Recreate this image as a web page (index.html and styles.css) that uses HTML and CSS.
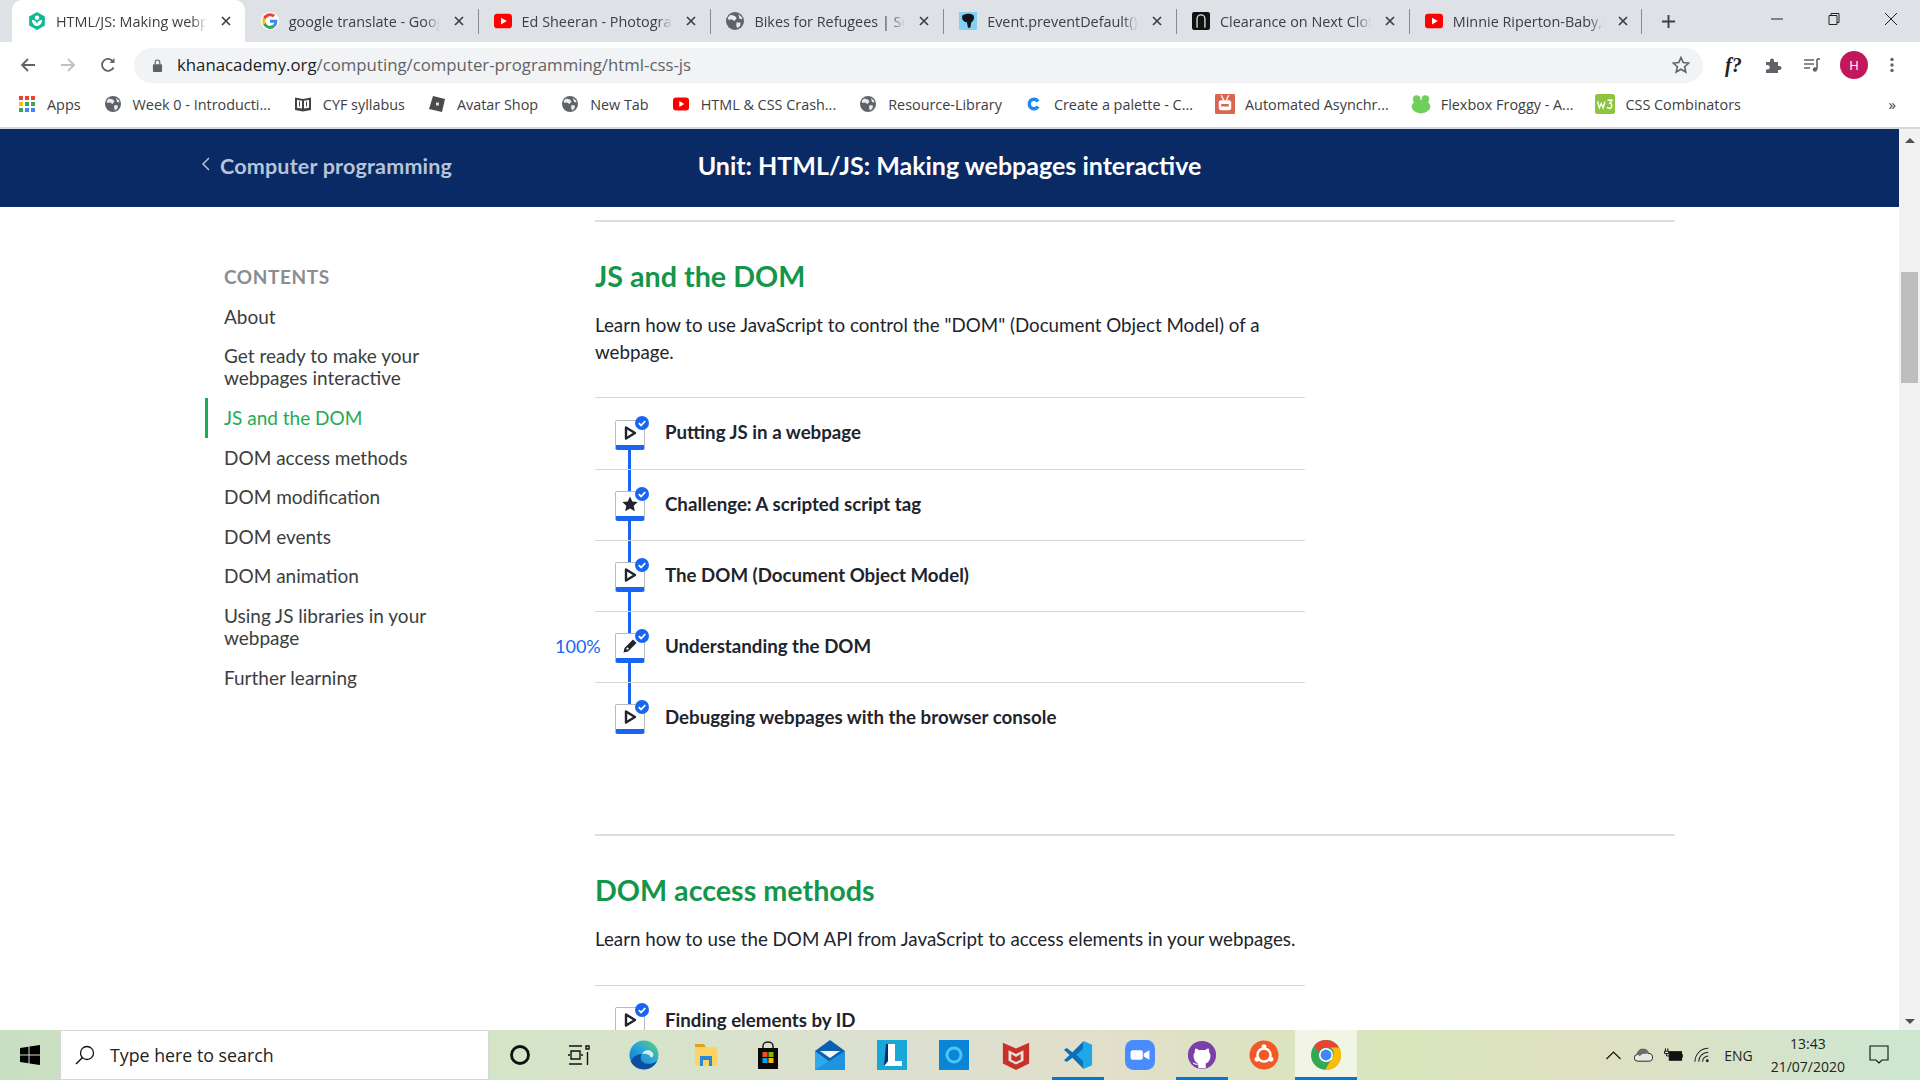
FILE: index.html
```html
<!DOCTYPE html>
<html lang="en">
<head>
    <meta charset="UTF-8">
    <title>HTML/JS: Making webpages interactive</title>
    <link rel="stylesheet" href="styles.css">
</head>
<body>
    <svg class="defs" width="0" height="0">
        <defs>
            <linearGradient id="edge-body" x1="0" y1="1" x2="1" y2="0"><stop offset="0" stop-color="#0c6fc4"/><stop offset=".55" stop-color="#2aa6dc"/><stop offset="1" stop-color="#5fd36a"/></linearGradient>
        </defs>
        <symbol id="yt" viewBox="0 0 16 16"><rect x="0" y="1.5" width="16" height="13" rx="3" fill="#f00"/><path d="M6.300 5v6l5-3z" fill="#fff"/></symbol>
        <symbol id="globe" viewBox="0 0 16 16"><circle cx="8" cy="8" r="8" fill="#5f6368"/><path d="M4 2.500l4 1 1.500 2-2 2.500-2.500-1.500-2.500.5-1-2zM9.500 9l3.500.5-.5 3-2.500 2-1-3zM11 2l3 2.500.5 2-2.500-.5z" fill="#e8eaed"/></symbol>
        <symbol id="close" viewBox="0 0 10 10"><path d="M1 1l8 8M9 1l-8 8" stroke="#3c4043" stroke-width="1.700" fill="none"/></symbol>
        <symbol id="play" viewBox="0 0 16 16"><path d="M4 2.500l9 5.500-9 5.500z" fill="#fff" stroke="#21242c" stroke-width="2.400" stroke-linejoin="round"/></symbol>
        <symbol id="star" viewBox="0 0 16 16"><path d="M8 .5l2.300 5 5.400.6-4 3.700 1.100 5.400L8 12.500l-4.800 2.700 1.100-5.400-4-3.700 5.400-.6z" fill="#21242c"/></symbol>
        <symbol id="pencil" viewBox="0 0 16 16"><path d="M11 1.500l3.500 3.500-8.500 8.500-4.500 1 1-4.500z" fill="#21242c"/><path d="M4.800 10l1.400 1.400" stroke="#fff" stroke-width="2"/></symbol>
        <symbol id="check" viewBox="0 0 14 14"><circle cx="7" cy="7" r="7" fill="#1865f2"/><path d="M3.800 7.200l2.300 2.300 4.200-4.500" stroke="#fff" stroke-width="1.800" fill="none"/></symbol>
        <symbol id="chrome" viewBox="0 0 32 32"><circle cx="16" cy="16" r="16" fill="#34a853"/><path d="M16 0a16 16 0 0 1 13.900 8H16a8 8 0 0 0-7.400 5L3.300 6A16 16 0 0 1 16 0z" fill="#ea4335"/><path d="M29.900 8A16 16 0 0 1 15 32l7-12a8 8 0 0 0-1-12z" fill="#fbbc05"/><circle cx="16" cy="16" r="7.500" fill="#fff"/><circle cx="16" cy="16" r="5.800" fill="#4285f4"/></symbol>
    </svg>

    <div class="tabstrip">
        <div class="tab active">
            <svg class="favicon" viewBox="0 0 16 16"><path d="M8 0l7 4v8l-7 4-7-4V4z" fill="#14b894"/><circle cx="8" cy="5" r="2" fill="#fff"/><path d="M3.500 7c2 0 4 1 4.500 4 .5-3 2.500-4 4.500-4 0 3-2 5-4.500 5.500C5.500 12 3.500 10 3.500 7z" fill="#fff"/></svg>
            <span class="tab-label">HTML/JS: Making webp</span>
            <svg class="tab-close"><use href="#close"/></svg>
        </div>
        <div class="tab">
            <svg class="favicon" viewBox="0 0 16 16"><circle cx="8" cy="8" r="8" fill="#fff"/><path d="M14.500 8.200c0-.5 0-1-.1-1.400H8v2.700h3.700c-.2.900-.7 1.600-1.400 2.100l2.200 1.700c1.300-1.200 2-3 2-5.100z" fill="#4285f4"/><path d="M8 15c1.800 0 3.400-.6 4.500-1.700l-2.200-1.700c-.6.400-1.400.7-2.300.7-1.800 0-3.300-1.200-3.800-2.800L1.900 11.200C3 13.500 5.300 15 8 15z" fill="#34a853"/><path d="M4.200 9.500C4 9 3.900 8.500 3.900 8s.1-1 .3-1.500L1.900 4.800C1.500 5.700 1.200 6.800 1.200 8s.3 2.300.7 3.200z" fill="#fbbc05"/><path d="M8 3.700c1 0 1.900.3 2.600 1l2-2C11.400 1.700 9.800 1 8 1 5.300 1 3 2.500 1.900 4.800l2.300 1.700C4.700 4.900 6.200 3.700 8 3.700z" fill="#ea4335"/></svg>
            <span class="tab-label">google translate - Goog</span>
            <svg class="tab-close"><use href="#close"/></svg>
        </div>
        <div class="tab sep">
            <svg class="favicon"><use href="#yt"/></svg>
            <span class="tab-label">Ed Sheeran - Photogra</span>
            <svg class="tab-close"><use href="#close"/></svg>
        </div>
        <div class="tab sep">
            <svg class="favicon"><use href="#globe"/></svg>
            <span class="tab-label">Bikes for Refugees | Sc</span>
            <svg class="tab-close"><use href="#close"/></svg>
        </div>
        <div class="tab sep">
            <svg class="favicon" viewBox="0 0 16 16"><rect width="16" height="16" fill="#83d0f2"/><path d="M3 3c3-2 8-2 10 0 1 2 0 5-2 6l-1 5H8L7 9C4 9 2 6 3 3z" fill="#15141a"/></svg>
            <span class="tab-label">Event.preventDefault()</span>
            <svg class="tab-close"><use href="#close"/></svg>
        </div>
        <div class="tab sep">
            <svg class="favicon" viewBox="0 0 16 16"><rect width="16" height="16" rx="2" fill="#111"/><path d="M4.500 14V6a3.500 3.500 0 0 1 7 0v8" stroke="#ddd" stroke-width="1.200" fill="none"/></svg>
            <span class="tab-label">Clearance on Next Clot</span>
            <svg class="tab-close"><use href="#close"/></svg>
        </div>
        <div class="tab sep last">
            <svg class="favicon"><use href="#yt"/></svg>
            <span class="tab-label">Minnie Riperton-Baby,t</span>
            <svg class="tab-close"><use href="#close"/></svg>
        </div>
        <svg class="new-tab" viewBox="0 0 16 16"><path d="M8 1v14M1 8h14" stroke="#3c4043" stroke-width="2"/></svg>
        <div class="win-controls">
            <svg class="win-btn" viewBox="0 0 12 12"><path d="M0 6h12" stroke="#222" stroke-width="1"/></svg>
            <svg class="win-btn" viewBox="0 0 12 12"><path d="M3 2.500V.5h8v9H9M1 2.500h8v9H1z" stroke="#222" stroke-width="1" fill="none"/></svg>
            <svg class="win-btn" viewBox="0 0 12 12"><path d="M0 0l12 12M12 0L0 12" stroke="#222" stroke-width="1"/></svg>
        </div>
    </div>

    <div class="toolbar">
        <svg class="tool" viewBox="0 0 16 16"><path d="M15 8H2M8 2L2 8l6 6" stroke="#5f6368" stroke-width="1.800" fill="none"/></svg>
        <svg class="tool" viewBox="0 0 16 16"><path d="M1 8h13M8 2l6 6-6 6" stroke="#bdc1c6" stroke-width="1.800" fill="none"/></svg>
        <svg class="tool" viewBox="0 0 16 16"><path d="M13.500 10.500A6 6 0 1 1 13 4.500" stroke="#5f6368" stroke-width="1.800" fill="none"/><path d="M14.500 1v5h-5z" fill="#5f6368"/></svg>
        <div class="omnibox">
            <svg class="lock" viewBox="0 0 12 14"><rect x="1" y="5.500" width="10" height="8.500" rx="1" fill="#5f6368"/><path d="M3.500 6V3.500a2.500 2.500 0 0 1 5 0V6" stroke="#5f6368" stroke-width="1.300" fill="none"/></svg>
            <span class="url"><span class="host">khanacademy.org</span>/computing/computer-programming/html-css-js</span>
            <svg class="bookmark-star" viewBox="0 0 16 16"><path d="M8 1.300l2 4.500 4.900.5-3.700 3.200 1.100 4.800L8 11.800l-4.300 2.500 1.100-4.800L1.100 6.300 6 5.800z" fill="none" stroke="#5f6368" stroke-width="1.400"/></svg>
        </div>
        <div class="extensions">
            <span class="ext-f">f?</span>
            <svg class="ext" viewBox="0 0 16 16"><path d="M1 5h4V3.500a2 2 0 0 1 4 0V5h4v4h1.500a2 2 0 0 1 0 4H13v3H1v-3.500h1.500a2.200 2.200 0 0 0 0-4.500H1z" fill="#5f6368"/></svg>
            <svg class="ext" viewBox="0 0 18 16"><path d="M1 3h10M1 7h10M1 11h6" stroke="#5f6368" stroke-width="1.600"/><path d="M14 2v10" stroke="#5f6368" stroke-width="1.600"/><path d="M14 2h3" stroke="#5f6368" stroke-width="1.600"/><circle cx="12" cy="12.500" r="2.200" fill="#5f6368"/></svg>
            <span class="avatar">H</span>
            <svg class="ext dots" viewBox="0 0 4 16"><circle cx="2" cy="2.500" r="1.700" fill="#5f6368"/><circle cx="2" cy="8" r="1.700" fill="#5f6368"/><circle cx="2" cy="13.500" r="1.700" fill="#5f6368"/></svg>
        </div>
    </div>

    <div class="bookmarks">
        <div class="bm bm-apps">
            <svg class="favicon" viewBox="0 0 16 16"><g fill="#ea4335"><rect width="4" height="4"/><rect x="6" width="4" height="4"/><rect x="12" width="4" height="4"/></g><g fill="#fbbc05"><rect y="6" width="4" height="4"/></g><g fill="#34a853"><rect x="6" y="6" width="4" height="4"/><rect x="12" y="6" width="4" height="4"/><rect y="12" width="4" height="4"/></g><g fill="#4285f4"><rect x="6" y="12" width="4" height="4"/><rect x="12" y="12" width="4" height="4"/></g></svg>
            <span>Apps</span>
        </div>
        <div class="bm"><svg class="favicon"><use href="#globe"/></svg><span>Week 0 - Introducti...</span></div>
        <div class="bm">
            <svg class="favicon" viewBox="0 0 16 16"><path d="M0 1.500l8 1.500 8-1.500V14l-8 1.500L0 14z" fill="#444"/><path d="M2 4l5 .8V12.500L2 11.700zM14 4l-5 .8V12.500l5-.8z" fill="#fff"/><path d="M4.500 5.500v5M11.500 5.500v5" stroke="#444"/></svg>
            <span>CYF syllabus</span>
        </div>
        <div class="bm">
            <svg class="favicon" viewBox="0 0 16 16"><path d="M4 0l12 3-3 13L0 13z" fill="#4b4b4b"/><rect x="7" y="6.500" width="3" height="3" fill="#ddd"/></svg>
            <span>Avatar Shop</span>
        </div>
        <div class="bm"><svg class="favicon"><use href="#globe"/></svg><span>New Tab</span></div>
        <div class="bm"><svg class="favicon"><use href="#yt"/></svg><span>HTML &amp; CSS Crash...</span></div>
        <div class="bm"><svg class="favicon"><use href="#globe"/></svg><span>Resource-Library</span></div>
        <div class="bm">
            <svg class="favicon" viewBox="0 0 16 16"><path d="M13.500 4.500A6.500 6.500 0 1 0 13.500 11.500L10.500 9.500A3 3 0 1 1 10.500 6.500z" fill="#1e88f5"/></svg>
            <span>Create a palette - C...</span>
        </div>
        <div class="bm">
            <svg class="favicon big" viewBox="0 0 16 16"><rect width="16" height="16" rx="1" fill="#d9674f"/><rect x="3" y="5" width="10" height="8" rx="2" fill="#fff"/><path d="M5 1l2 4M11 1L9 5" stroke="#fff"/><path d="M5 9h6" stroke="#d9674f" stroke-width="2"/></svg>
            <span>Automated Asynchr...</span>
        </div>
        <div class="bm">
            <svg class="favicon big" viewBox="0 0 16 16"><circle cx="4.500" cy="4" r="3" fill="#6fd05c"/><circle cx="11.500" cy="4" r="3" fill="#6fd05c"/><ellipse cx="8" cy="10" rx="7.500" ry="5.500" fill="#6fd05c"/></svg>
            <span>Flexbox Froggy - A...</span>
        </div>
        <div class="bm">
            <svg class="favicon big" viewBox="0 0 16 16"><rect width="16" height="16" rx="2" fill="#8cc63f"/><path d="M2 6l1.500 5 1.500-3.500L6.500 11 8 6M10 5h3.500l-1.500 2.500c2 0 2 4-.5 4-1 0-1.500-.5-1.800-1" stroke="#fff" stroke-width="1.100" fill="none"/></svg>
            <span>CSS Combinators</span>
        </div>
        <span class="bm-more">»</span>
    </div>

    <div class="viewport">
        <div class="page">
            <div class="unit-bar">
                <div class="back-link">
                    <svg class="back-chevron" viewBox="0 0 8 14"><path d="M7 1L1 7l6 6" stroke="#b8c4d9" stroke-width="1.500" fill="none"/></svg>
                    <span>Computer programming</span>
                </div>
                <div class="unit-title">Unit: HTML/JS: Making webpages interactive</div>
            </div>

            <div class="content">
                <nav class="sidebar">
                    <div class="contents-label">CONTENTS</div>
                    <a class="side-link">About</a>
                    <a class="side-link">Get ready to make your<br>webpages interactive</a>
                    <a class="side-link current">JS and the DOM</a>
                    <a class="side-link">DOM access methods</a>
                    <a class="side-link">DOM modification</a>
                    <a class="side-link">DOM events</a>
                    <a class="side-link">DOM animation</a>
                    <a class="side-link">Using JS libraries in your<br>webpage</a>
                    <a class="side-link">Further learning</a>
                </nav>

                <main class="sections">
                    <section class="section">
                        <h2>JS and the DOM</h2>
                        <p>Learn how to use JavaScript to control the "DOM" (Document Object Model) of a webpage.</p>
                        <div class="lessons">
                            <div class="lesson">
                                <div class="lesson-icon linked"><svg class="glyph"><use href="#play"/></svg><svg class="badge"><use href="#check"/></svg></div>
                                <span>Putting JS in a webpage</span>
                            </div>
                            <div class="lesson">
                                <div class="lesson-icon linked"><svg class="glyph"><use href="#star"/></svg><svg class="badge"><use href="#check"/></svg></div>
                                <span>Challenge: A scripted script tag</span>
                            </div>
                            <div class="lesson">
                                <div class="lesson-icon linked"><svg class="glyph"><use href="#play"/></svg><svg class="badge"><use href="#check"/></svg></div>
                                <span>The DOM (Document Object Model)</span>
                            </div>
                            <div class="lesson">
                                <div class="percent">100%</div>
                                <div class="lesson-icon linked"><svg class="glyph"><use href="#pencil"/></svg><svg class="badge"><use href="#check"/></svg></div>
                                <span>Understanding the DOM</span>
                            </div>
                            <div class="lesson">
                                <div class="lesson-icon"><svg class="glyph"><use href="#play"/></svg><svg class="badge"><use href="#check"/></svg></div>
                                <span>Debugging webpages with the browser console</span>
                            </div>
                        </div>
                    </section>
                    <section class="section">
                        <h2>DOM access methods</h2>
                        <p>Learn how to use the DOM API from JavaScript to access elements in your webpages.</p>
                        <div class="lessons">
                            <div class="lesson">
                                <div class="lesson-icon"><svg class="glyph"><use href="#play"/></svg><svg class="badge"><use href="#check"/></svg></div>
                                <span>Finding elements by ID</span>
                            </div>
                        </div>
                    </section>
                </main>
            </div>
        </div>

        <div class="scrollbar">
            <div class="arrow up"></div>
            <div class="thumb"></div>
            <div class="arrow down"></div>
        </div>
    </div>

    <div class="taskbar">
        <div class="start">
            <svg class="start-logo" viewBox="0 0 20 20"><path d="M0 3l8.500-1.200v7.700H0zM9.500 1.600L20 0v9.500H9.500zM0 10.500h8.500v7.700L0 17zM9.500 10.500H20V20L9.500 18.400z" fill="#000"/></svg>
        </div>
        <div class="search">
            <svg class="search-icon" viewBox="0 0 20 20"><circle cx="12" cy="8" r="6.500" fill="none" stroke="#111" stroke-width="1.300"/><path d="M7.500 12.500L1 19" stroke="#111" stroke-width="1.500"/></svg>
            <span>Type here to search</span>
        </div>
        <div class="task"><svg class="task-icon" viewBox="0 0 28 28"><circle cx="14" cy="14" r="8.500" fill="none" stroke="#111" stroke-width="2.800"/></svg></div>
        <div class="task"><svg class="task-icon" viewBox="0 0 28 28"><path d="M1 5h13M1 23h13M3 10h9v8H3zM0 14h2M13 14h2M18 5h3v3h-3zM19.500 11v13" fill="none" stroke="#111" stroke-width="1.400"/></svg></div>
        <div class="task"><svg class="task-icon big" viewBox="0 0 32 32"><circle cx="16" cy="16" r="15.500" fill="url(#edge-body)"/><path d="M2 23c3 7 11 9 16 8 5-.5 10-4 12-9-3 3-8 4-12 3-4-1-6-4-5.500-7 0-1 .5-2 1-3-5 0-9 3-11.500 8z" fill="#0b4f9e"/><path d="M14 15c1-3 4-4.500 7-4 3 .5 5 2.500 5 5 0 1.500-1 2.500-3 2.500-.5-3-5-4.500-9-3.500z" fill="#d8f0e8"/></svg></div>
        <div class="task"><svg class="task-icon" viewBox="0 0 28 28"><path d="M3 3h9l2 3H3z" fill="#e0a020"/><path d="M3 6h22v19H3z" fill="#fcd462"/><path d="M8 25v-10h12v10h-3v-6h-6v6z" fill="#2b88d8"/></svg></div>
        <div class="task"><svg class="task-icon" viewBox="0 0 28 28"><path d="M9 9V5a5 4 0 0 1 10 0v4" stroke="#222" stroke-width="1.500" fill="none"/><rect x="4" y="7" width="20" height="21" fill="#0a0a0a"/><rect x="8.500" y="11" width="5" height="5" fill="#f25022"/><rect x="14.500" y="11" width="5" height="5" fill="#7fba00"/><rect x="8.500" y="17" width="5" height="5" fill="#00a4ef"/><rect x="14.500" y="17" width="5" height="5" fill="#ffb900"/></svg></div>
        <div class="task"><svg class="task-icon big" viewBox="0 0 30 30"><path d="M0 11L15 0l15 11v19H0z" fill="#0b5fb0"/><path d="M5 11h20l-10 7z" fill="#f4f6f8"/><path d="M0 11l15 11 15-11v19H0z" fill="#2fa8ee"/><path d="M0 30l30-19v19z" fill="#1d94de"/></svg></div>
        <div class="task"><svg class="task-icon big" viewBox="0 0 30 30"><rect width="30" height="30" fill="#19a7d8"/><path d="M11 4h7v17h7v5H7l4-5z" fill="#fff"/><path d="M9 4h2v17l-4 5z" fill="#0b2a7a"/></svg></div>
        <div class="task"><svg class="task-icon big" viewBox="0 0 30 30"><rect width="30" height="30" fill="#0a84d6"/><circle cx="15" cy="15" r="7" fill="none" stroke="#49c6f5" stroke-width="3"/></svg></div>
        <div class="task"><svg class="task-icon big" viewBox="0 0 28 32"><path d="M0 3l14 6 14-6v22l-14 7-14-7z" fill="#c8312a"/><path d="M6 11l8 4 8-4v11l-8 4-8-4z" fill="#e4e2d6"/><path d="M9 15l5 3 5-3v6l-5 2.500L9 21z" fill="#c8312a"/></svg></div>
        <div class="task on"><svg class="task-icon big" viewBox="0 0 32 32"><path d="M22 1L10 13 4 8.500 1 10.500 7 16l-6 5.500 3 2L10 19l12 12z" fill="#0a70b8"/><path d="M22 1l9 4v22l-9 4V23l-8-7 8-7z" fill="#1fa7e8"/></svg></div>
        <div class="task"><svg class="task-icon big" viewBox="0 0 32 32"><rect width="32" height="32" rx="9" fill="#4a8cff"/><rect x="6" y="11" width="13" height="10" rx="2" fill="#fff"/><path d="M20 14.500l6-3.500v10l-6-3.500z" fill="#fff"/></svg></div>
        <div class="task on"><svg class="task-icon big" viewBox="0 0 32 32"><circle cx="16" cy="16" r="15" fill="#7a3fa8"/><path d="M8 31a15 15 0 0 0 16 0z" fill="#ddd"/><path d="M12 30v-4c-3 1-5 0-6-2 2 0 2 2 6 1-3-1-5-4-5-8 0-2 .5-3 1.500-4-.5-1.500 0-3 .5-4 1.500 0 3 1 4 2 2-.5 4-.5 6 0 1-1 2.500-2 4-2 .5 1 1 2.500.5 4 1 1 1.500 2 1.500 4 0 4-2 7-5 8v5z" fill="#fff"/></svg></div>
        <div class="task"><svg class="task-icon big" viewBox="0 0 32 32"><circle cx="16" cy="16" r="15.500" fill="#f15a24"/><circle cx="16" cy="16" r="7" fill="none" stroke="#fff" stroke-width="2.600"/><circle cx="16" cy="7" r="2.600" fill="#fff"/><circle cx="8.500" cy="20.500" r="2.600" fill="#fff"/><circle cx="23.500" cy="20.500" r="2.600" fill="#fff"/></svg></div>
        <div class="task on lit"><svg class="task-icon big"><use href="#chrome"/></svg></div>

        <div class="tray">
            <svg class="tray-icon caret" viewBox="0 0 16 16"><path d="M1 12l7-7 7 7" stroke="#111" stroke-width="1.200" fill="none"/></svg>
            <svg class="tray-icon cloud" viewBox="0 0 20 16"><path d="M4 14.500a3.500 3.500 0 0 1-.5-7A5.500 5.500 0 0 1 10 2a5 5 0 0 1 5 4.500 4 4 0 0 1 1 8z" fill="#e8e8e4" stroke="#222"/><path d="M3.500 7.500A5.500 5.500 0 0 1 10 2a5 5 0 0 1 5 4.500L9 7l-3 2z" fill="#6e6e6e"/></svg>
            <svg class="tray-icon battery" viewBox="0 0 20 16"><rect x="5.500" y="4.500" width="13" height="9" fill="#111" stroke="#111"/><path d="M19 7v4" stroke="#111" stroke-width="1.500"/><path d="M1.500 1v3M4 1v3M.5 4h4.500v2.500H.5zM2.700 6.500V9H6" stroke="#111" fill="none"/></svg>
            <svg class="tray-icon wifi" viewBox="0 0 20 16"><path d="M1 15A14 14 0 0 1 15 1M5 15A10 10 0 0 1 15 5M9 15a6 6 0 0 1 6-6" stroke="#222" stroke-width="1.100" fill="none"/><circle cx="14" cy="14" r="1.500" fill="#222"/></svg>
            <span class="lang">ENG</span>
            <div class="clock"><span>13:43</span><span>21/07/2020</span></div>
            <svg class="tray-icon notify" viewBox="0 0 20 20"><path d="M1 1h18v14h-6l-3 3-3-3H1z" fill="none" stroke="#111" stroke-width="1.100"/></svg>
        </div>
    </div>
</body>
</html>
```

FILE: styles.css
```css
* {
    box-sizing: border-box;
}
html, body {
    margin: 0;
    height: 100%;
}
body {
    width: 1920px;
    height: 1080px;
    overflow: hidden;
    display: flex;
    flex-direction: column;
    background: #fff;
    font-family: "Open Sans", "Liberation Sans", sans-serif;
    color: #3c4043;
}
.defs {
    position: absolute;
}

/* browser chrome */
.tabstrip {
    height: 42px;
    flex: none;
    display: flex;
    align-items: center;
    padding-left: 12px;
    background: #dee1e6;
}
.tab {
    width: 232.8px;
    height: 42px;
    flex: none;
    display: flex;
    align-items: center;
    gap: 10px;
    padding: 0 14px 0 16px;
    font-size: 14.4px;
    position: relative;
}
.tab .favicon {
    width: 18px;
    height: 18px;
}
.tab.active {
    background: #fff;
    border-radius: 10px 10px 0 0;
    color: #3c4043;
}
.tab.sep::before,
.tab.last::after {
    content: "";
    position: absolute;
    top: 9px;
    height: 25px;
    width: 1px;
    left: 0;
    background: #888a8e;
}
.tab.last::after {
    left: auto;
    right: 0;
}
.favicon {
    width: 16px;
    height: 16px;
    flex: none;
}
.favicon.big {
    width: 20px;
    height: 20px;
}
.tab-label {
    flex: 1;
    min-width: 0;
    white-space: nowrap;
    -webkit-mask-image: linear-gradient(to right, #000 90%, transparent);
    mask-image: linear-gradient(to right, #000 90%, transparent);
}
.tab-close {
    width: 10px;
    height: 10px;
    flex: none;
    margin-left: 4px;
}
.new-tab {
    width: 15px;
    height: 15px;
    margin-left: 19px;
}
.win-controls {
    margin-left: auto;
    display: flex;
    gap: 45px;
    padding-right: 23px;
    padding-bottom: 4px;
}
.win-btn {
    width: 12px;
    height: 12px;
}
.toolbar {
    height: 42px;
    flex: none;
    display: flex;
    align-items: center;
    background: #fff;
    padding-left: 20px;
    padding-top: 4px;
}
.tool {
    width: 16px;
    height: 16px;
    margin-right: 24px;
    flex: none;
}
.omnibox {
    width: 1569px;
    height: 35px;
    margin-left: -6px;
    flex: none;
    display: flex;
    align-items: center;
    padding: 0 13px 0 18px;
    background: #f1f3f4;
    border-radius: 18px;
}
.lock {
    width: 11px;
    height: 13px;
    margin-right: 14px;
}
.url {
    font-size: 16.8px;
    color: #5f6368;
    padding-bottom: 1px;
}
.host {
    color: #202124;
}
.bookmark-star {
    width: 18px;
    height: 18px;
    margin-left: auto;
}
.extensions {
    display: flex;
    align-items: center;
    padding-left: 22px;
    gap: 21px;
}
.ext-f {
    width: 18px;
    font-family: "Liberation Serif", serif;
    font-style: italic;
    font-weight: bold;
    font-size: 20px;
    color: #222;
}
.ext {
    width: 18px;
    height: 16px;
}
.avatar {
    width: 28px;
    height: 28px;
    border-radius: 50%;
    margin: 0 -1px 0 -2px;
    background: #c2185b;
    color: #fff;
    font-size: 13px;
    display: flex;
    align-items: center;
    justify-content: center;
}
.dots {
    width: 4px;
    margin-left: 2px;
}
.bookmarks {
    height: 43px;
    flex: none;
    display: flex;
    align-items: center;
    padding: 0 0 3px 19px;
    gap: 24px;
    background: #fff;
    font-size: 14.4px;
    color: #3c4043;
}
.bm {
    display: flex;
    align-items: center;
    gap: 12px;
    white-space: nowrap;
}
.bm .big {
    margin-left: -2px;
    margin-right: -2px;
}
.bm-more {
    margin-left: auto;
    margin-right: 24px;
    font-size: 15px;
}

/* page */
.viewport {
    flex: 1;
    min-height: 0;
    display: flex;
    border-top: 2px solid #d6d8dd;
}
.page {
    flex: 1;
    min-width: 0;
    overflow: hidden;
    color: #21242c;
    font-family: Lato, "Liberation Sans", sans-serif;
}
.unit-bar {
    height: 78px;
    display: grid;
    grid-template-columns: 1fr auto 1fr;
    align-items: center;
    padding: 0 205px;
    background: #0a2a66;
}
.back-link {
    grid-column: 1;
    display: flex;
    align-items: center;
    gap: 10px;
    font-size: 21.5px;
    font-weight: bold;
    letter-spacing: .2px;
    color: #b8c4d9;
    white-space: nowrap;
    padding-bottom: 5px;
    margin-left: -3px;
}
.back-chevron {
    width: 8px;
    height: 14px;
    margin-bottom: 3px;
}
.unit-title {
    grid-column: 2;
    font-size: 25px;
    font-weight: bold;
    color: #fff;
    white-space: nowrap;
    padding-bottom: 6px;
}
.content {
    display: flex;
    padding: 13px 0 0 205px;
}
.sidebar {
    width: 390px;
    flex: none;
    padding-top: 46px;
    font-size: 19px;
    line-height: 22px;
}
.contents-label {
    padding-left: 19px;
    margin-bottom: 9px;
    font-size: 19px;
    font-weight: bold;
    letter-spacing: .6px;
    color: #8a8d91;
}
.side-link {
    display: block;
    padding: 8.8px 0 8.8px 16px;
    border-left: 3px solid transparent;
    color: #3b3e40;
}
.side-link.current {
    color: #1fab54;
    border-left-color: #1fab54;
}
.sections {
    width: 1080px;
    flex: none;
}
.section {
    border-top: 2px solid #dcdee0;
    padding-top: 36px;
    height: 614px;
}
.section h2 {
    margin: 0 0 18px;
    font-size: 28.7px;
    line-height: 36px;
    font-weight: bold;
    color: #14964a;
}
.section p {
    width: 710px;
    margin: 0 0 32px;
    font-size: 18.75px;
    line-height: 26.5px;
}
.lessons {
    width: 710px;
}
.lesson {
    height: 71px;
    display: flex;
    align-items: center;
    gap: 20px;
    padding-left: 20px;
    border-top: 1px solid #d6d8da;
    font-size: 18.7px;
    font-weight: bold;
    position: relative;
}
.lesson:first-child {
    height: 72px;
}
.lesson span {
    padding-bottom: 3px;
}
.lesson-icon {
    width: 30px;
    height: 30px;
    flex: none;
    margin-top: 2px;
    display: flex;
    align-items: center;
    justify-content: center;
    border: 1px solid #b8babd;
    border-bottom: 5px solid #1865f2;
    border-radius: 2px 2px 3px 3px;
    position: relative;
}
.lesson-icon.linked::after {
    content: "";
    position: absolute;
    left: 12px;
    top: 29px;
    width: 3px;
    height: 41px;
    background: #1865f2;
}
.glyph {
    width: 16px;
    height: 16px;
}
.badge {
    position: absolute;
    top: -5px;
    right: -5px;
    width: 14px;
    height: 14px;
}
.percent {
    position: absolute;
    left: -40px;
    padding-bottom: 2px;
    font-size: 18px;
    font-weight: normal;
    color: #1865f2;
}

/* scrollbar */
.scrollbar {
    width: 21px;
    flex: none;
    display: flex;
    flex-direction: column;
    align-items: center;
    background: #f1f1f1;
    position: relative;
}
.arrow {
    width: 0;
    height: 0;
    border-left: 5px solid transparent;
    border-right: 5px solid transparent;
}
.arrow.up {
    margin-top: 9px;
    border-bottom: 5px solid #505050;
}
.arrow.down {
    margin-top: auto;
    margin-bottom: 6px;
    border-top: 5px solid #505050;
}
.thumb {
    width: 17px;
    height: 111px;
    margin-top: 129px;
    background: #bdbdbd;
}

/* windows taskbar */
.taskbar {
    height: 50px;
    flex: none;
    display: flex;
    align-items: stretch;
    background: linear-gradient(to right, #c9dfc1 0, #d4e5c7 500px, #dcdfd0 900px, #e2dfca 1100px, #d8e6bb 1400px, #e0e0c2 1580px, #cde6d0 1900px);
}
.start {
    width: 60px;
    display: flex;
    align-items: center;
    justify-content: center;
}
.start-logo {
    width: 20px;
    height: 20px;
}
.search {
    width: 429px;
    display: flex;
    align-items: center;
    gap: 15px;
    padding-left: 14px;
    background: #fff;
    border: 1px solid #d5d8d3;
    font-size: 17.8px;
    color: #222;
}
.search-icon {
    width: 20px;
    height: 20px;
}
.task {
    width: 62px;
    display: flex;
    align-items: center;
    justify-content: center;
    position: relative;
}
.task.on::after {
    content: "";
    position: absolute;
    left: 5px;
    right: 5px;
    bottom: 0;
    height: 3px;
    background: #0078d4;
}
.task.lit {
    background: rgba(255, 255, 255, .6);
}
.task.lit::after {
    left: 0;
    right: 0;
}
.task-icon {
    width: 28px;
    height: 28px;
}
.task-icon.big {
    width: 30px;
    height: 30px;
}
.tray {
    margin-left: auto;
    display: flex;
    align-items: center;
    gap: 11px;
    padding-right: 31px;
    font-size: 14px;
    color: #222;
}
.tray-icon {
    width: 19px;
    height: 16px;
}
.clock {
    display: flex;
    flex-direction: column;
    align-items: center;
    gap: 5px;
    margin: 0 13px 0 7px;
    line-height: 18px;
}
.notify {
    width: 20px;
    height: 20px;
}
```
